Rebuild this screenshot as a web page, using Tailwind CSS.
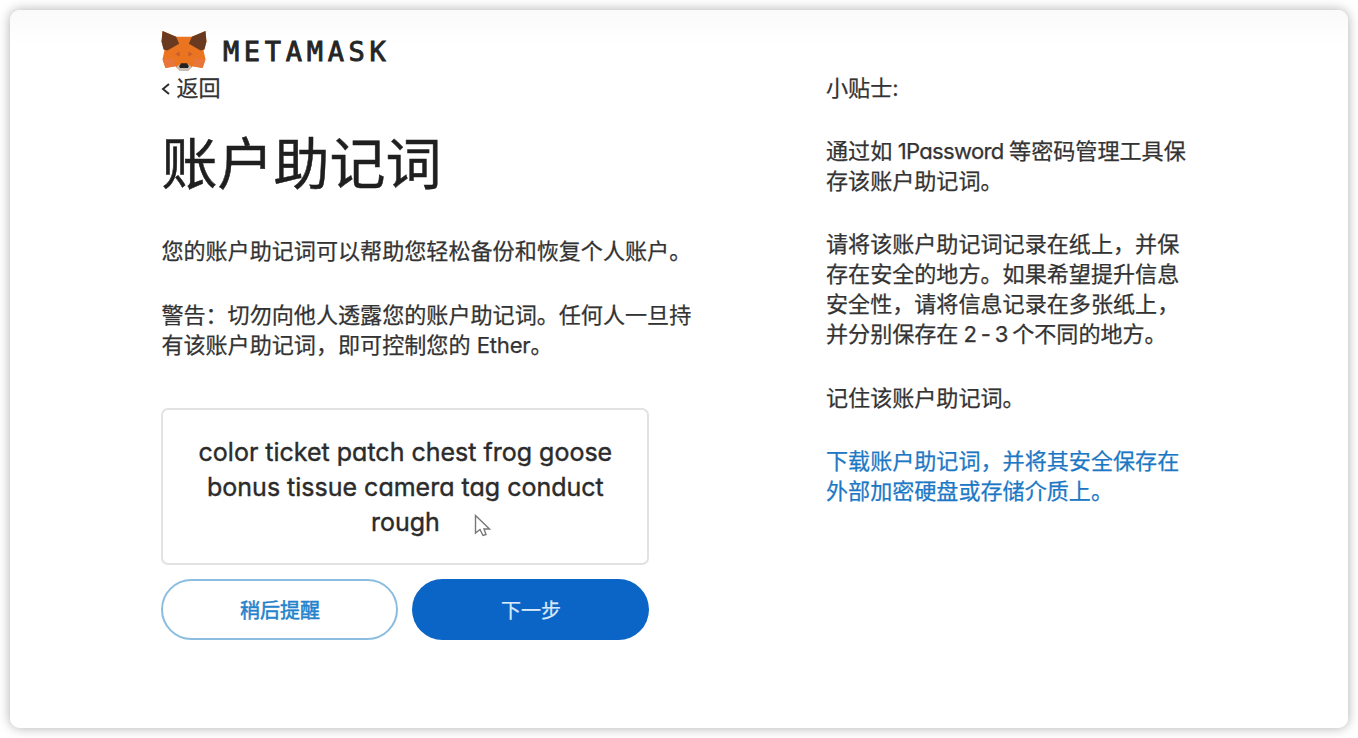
<!DOCTYPE html>
<html lang="zh-CN">
<head>
<meta charset="utf-8">
<title>MetaMask</title>
<script src="https://cdn.jsdelivr.net/npm/@tailwindcss/browser@4"></script>
</head>
<body class="h-[738px] overflow-hidden bg-white p-[10px] font-['Inter','Noto_Sans_CJK_SC',sans-serif] text-[22.08px] leading-[30px] text-[#333] [font-feature-settings:'cv11'] [-webkit-text-stroke:0.25px_currentColor]">
<div class="h-[718px] w-[1338px] rounded-[10px] bg-linear-to-b from-[#fafafa] to-white to-[36px] pl-[151.4px] pt-[19px] shadow-[0_0_12px_rgba(0,0,0,0.32)]">
  <header class="flex h-[44px] items-center">
    <svg class="h-[42px] w-[46px]" viewBox="0 0 46 43">
      <path d="M1 1 15 7H31L45 1 46 12 43 21 45 30 42 39 32 37 27 42H19L14 37 4 39 1 30 3 21 0 12Z" fill="#ea7420"/>
      <path d="M1 1 15 7 18 14 6 21 2 20 0 12Z" fill="#6a3a20"/>
      <path d="M45 1 31 7 28 14 40 21 44 20 46 12Z" fill="#6a3a20"/>
      <path d="M1 30 13 29 14 37 4 39Z M45 30 33 29 32 37 42 39Z" fill="#e8763a"/>
      <path d="M14 25 18 22 19 27Z M32 25 28 22 27 27Z" fill="#c85c30"/>
      <path d="M15 38 19 35H27L31 38 27 42H19Z" fill="#c6bdb7"/>
      <path d="M18 37 20 34H26L28 37 27 39H19Z" fill="#24201f"/>
    </svg>
    <div class="ml-[15.500px] mt-[1px] font-['DejaVu_Sans_Mono',monospace] text-[27px] tracking-[4.7px] text-[#252525] [-webkit-text-stroke:0.9px_#252525]">METAMASK</div>
  </header>
  <div class="flex">
    <main class="w-[664.6px]">
      <div class="flex items-center">
        <svg class="mr-[6px] mt-[2px] h-[12px] w-[9px]" viewBox="0 0 9 12" fill="none" stroke="#2e2e2e" stroke-width="2"><path d="M8 1 2 6 8 11"/></svg>返回
      </div>
      <h1 class="mt-[21px] h-[80px] text-[56px] leading-[80px] text-[#1f1f1f] [-webkit-text-stroke:0.5px_#1f1f1f]">账户助记词</h1>
      <p class="mt-[32px] whitespace-nowrap">您的账户助记词可以帮助您轻松备份和恢复个人账户。</p>
      <p class="mt-[34px] whitespace-nowrap">警告：切勿向他人透露您的账户助记词。任何人一旦持<br>有该账户助记词，即可控制您的 <span class="tracking-[-0.2px]">Ether</span>。</p>
      <div class="relative mt-[48px] h-[157px] w-[488px] rounded-[7px] border-2 border-[#e2e2e2] bg-white pt-[25px] text-center text-[25px] leading-[35px] text-[#2b2b2b] [-webkit-text-stroke:0.4px_#2b2b2b]">
        <div>color ticket patch chest frog goose</div>
        <div>bonus tissue camera tag conduct</div>
        <div>rough</div>
        <svg class="absolute left-[311px] top-[104px] h-[24px] w-[17px]" viewBox="0 0 17 24" fill="#fff" stroke="#777" stroke-width="1.4"><path d="M1.500 1.500V19L6 15.500 9 21.500 12 20.500 10 15H15.500Z"/></svg>
      </div>
      <div class="mt-[14px] flex gap-[14px] text-[20px]">
        <button class="h-[61px] w-[237px] rounded-full border-2 border-[#8bbde0] pt-[2px] text-[#2482cb] [-webkit-text-stroke:0.5px_#2482cb]">稍后提醒</button>
        <button class="h-[61px] w-[237px] rounded-full bg-[#0b65c6] pt-[2px] text-[#d9e9fa]">下一步</button>
      </div>
    </main>
    <aside class="flex flex-col gap-[33px] whitespace-nowrap">
      <p>小贴士:</p>
      <p>通过如<span class="tracking-[-0.7px]"> 1Password </span>等密码管理工具保<br>存该账户助记词。</p>
      <p>请将该账户助记词记录在纸上，并保<br>存在安全的地方。如果希望提升信息<br>安全性，请将信息记录在多张纸上，<br>并分别保存在<span class="tracking-[-1.2px]"> 2 - 3 </span>个不同的地方。</p>
      <p class="mt-[1px]">记住该账户助记词。</p>
      <p class="text-[#1c78c4]">下载账户助记词，并将其安全保存在<br>外部加密硬盘或存储介质上。</p>
    </aside>
  </div>
</div>
</body>
</html>
